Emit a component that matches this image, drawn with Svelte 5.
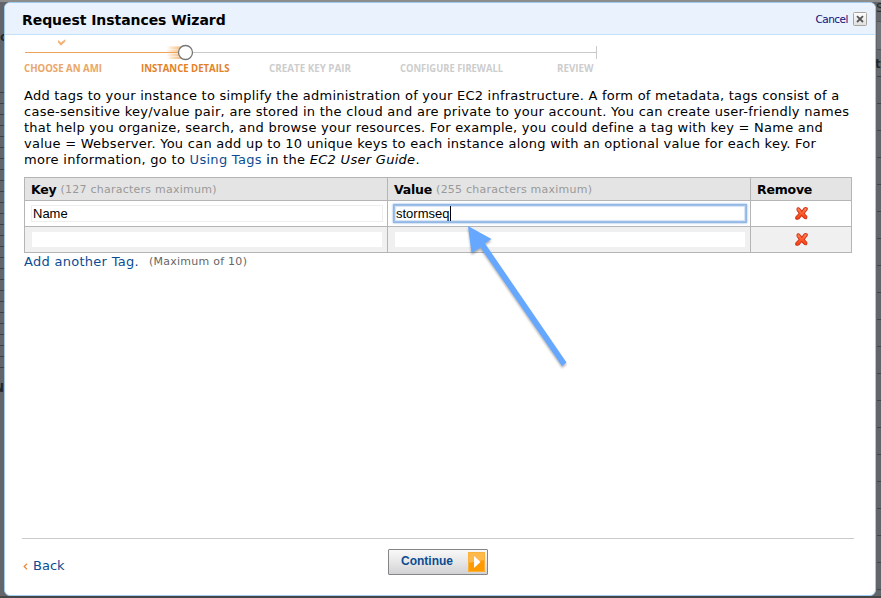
<script>
  const steps = [
    { label: 'CHOOSE AN AMI', x: 24, width: 78, state: 'done' },
    { label: 'INSTANCE DETAILS', x: 141, width: 88.5, state: 'current' },
    { label: 'CREATE KEY PAIR', x: 269, width: 82, state: '' },
    { label: 'CONFIGURE FIREWALL', x: 400, width: 103, state: '' },
    { label: 'REVIEW', x: 557, width: 36.5, state: '' }
  ];
  let rows = $state([
    { key: 'Name', value: 'stormseq', focused: true },
    { key: '', value: '', focused: false }
  ]);
</script>

<div class="page">
  <span class="behind left-top">lo</span>
  <span class="behind left-low">N</span>
  <span class="behind right-top">S</span>
  <span class="behind right-mid">to</span>
  <main class="dialog">
    <header>
      <h1>Request Instances Wizard</h1>
      <div class="cancel">
        <span>Cancel</span>
        <svg width="14" height="14" viewBox="0 0 14 14">
          <defs>
            <linearGradient id="close" x2="0" y2="1"><stop stop-color="#fff" /><stop offset="1" stop-color="#dedede" /></linearGradient>
          </defs>
          <rect x=".5" y=".5" width="13" height="13" rx="1" fill="url(#close)" stroke="#aaa69f" />
          <path d="M4 4.2 10 10M10 4.2 4 10" stroke="#555" stroke-width="1.8" />
        </svg>
      </div>
    </header>

    <svg class="steps" width="600" height="45" viewBox="6 35 600 45">
      <defs>
        <linearGradient id="trail"><stop stop-color="#f3a650" stop-opacity="0" /><stop offset="1" stop-color="#f3a650" stop-opacity=".5" /></linearGradient>
      </defs>
      <path d="M58 40v2.6l3 3.2 4.3-4.4v-2.2l-4.3 3.3z" fill="#f2b37a" />
      <path d="M185 52.5H596.5M596.5 46v13" fill="none" stroke="#cacaca" />
      <path d="M25 52.5H180" stroke="#eda35a" />
      <path d="M169 47h14v2h-14zM166 50h16v2h-16zM167 54h16v2h-16zM170 57h14v2h-14z" fill="url(#trail)" />
      <rect x="166" y="46" width="16" height="13" fill="url(#trail)" />
      <circle cx="185.5" cy="52.5" r="7" fill="#fff" stroke="#777" stroke-width="1.3" />
      {#each steps as step}
        <text class={step.state} x={step.x} y="72" textLength={step.width} lengthAdjust="spacingAndGlyphs">{step.label}</text>
      {/each}
    </svg>

    <section>
      <p class="intro">
        <span class="l1">Add tags to your instance to simplify the administration of your EC2 infrastructure. A form of metadata, tags consist of a</span>
        <span class="l2">case-sensitive key/value pair, are stored in the cloud and are private to your account. You can create user-friendly names</span>
        <span class="l3">that help you organize, search, and browse your resources. For example, you could define a tag with key = Name and</span>
        <span class="l4">value = Webserver. You can add up to 10 unique keys to each instance along with an optional value for each key. For</span>
        <span class="l5">more information, go to <a>Using Tags</a> in the <em>EC2 User Guide</em>.</span>
      </p>

      <div class="table">
        <div class="th"><b>Key</b> <small>(127 characters maximum)</small></div>
        <div class="th"><b>Value</b> <small>(255 characters maximum)</small></div>
        <div class="th"><b>Remove</b></div>
        {#each rows as row, i}
          <div class="td" class:alt={i % 2}><div class="field">{row.key}</div></div>
          <div class="td" class:alt={i % 2}>
            <div class="field" class:focused={row.focused}>{row.value}{#if row.focused}<i class="caret"></i>{/if}</div>
          </div>
          <div class="td remove" class:alt={i % 2}>
            <svg width="13" height="13" viewBox="0 0 14 14">
              <defs>
                <linearGradient id="red" x2="0" y2="1"><stop stop-color="#ff8a60" /><stop offset=".5" stop-color="#ff5a2b" /><stop offset="1" stop-color="#f34112" /></linearGradient>
              </defs>
              <path d="M2.6 1.1Q3.9.2 5.3 1.9L7.4 4.6 9.8 1.2Q11.2.1 13.2 1.2 13.6 2.6 12.2 4L9.9 7l2.7 2.9Q13.2 11.2 12.2 12.6 10.8 13 9.6 11.8L7.1 9.2 4.5 12.4Q2.8 13.8 .8 12.6.4 11 1.7 9.9L4.5 7 2.7 4.4Q1.6 2.6 2.6 1.1Z" fill="url(#red)" stroke="#d23218" stroke-width="1.1" />
            </svg>
          </div>
        {/each}
      </div>
      <div class="add"><a>Add another Tag.</a> <span>(Maximum of 10)</span></div>
    </section>

    <footer>
      <a class="back"><svg width="5" height="7" viewBox="0 0 5 7"><path d="M4 .7 1.2 3.5 4 6.3" fill="none" stroke="#ef8b3a" stroke-width="1.3" /></svg>Back</a>
      <button>
        <span>Continue</span>
        <svg width="17" height="20" viewBox="0 0 17 20">
          <path d="M0 0h17v20H0z" fill="#ff9a00" />
          <path d="M0 0h17v8L0 11z" fill="#ffb84b" />
          <path d="M.5 .5h16v19H.5z" fill="none" stroke="#f9b23c" />
          <path d="M6 4v12l6.5-6z" fill="#fff" />
        </svg>
      </button>
    </footer>
  </main>

  <svg class="arrow" width="130" height="160" viewBox="455 220 130 160">
    <path d="M468 226 491.5 239 485 243.5 566.5 362.5 562 366 480.5 247.5 471.5 253Z" fill="#66a8ff" />
  </svg>
</div>

<style>
  :global(body) { margin: 0; }
  .page {
    position: relative;
    box-sizing: border-box;
    width: 881px;
    height: 598px;
    padding: 2px 4px;
    overflow: hidden;
    font: 13px/16px 'DejaVu Sans', sans-serif;
    color: #000;
    background:
      linear-gradient(#8d8d8d, #8d8d8d) 0 0 / 100% 2px no-repeat,
      linear-gradient(#444648, #444648) 0 100% / 100% 2px no-repeat,
      linear-gradient(#62666a 0 21px, #51565a 21px 22px, #707478 22px 49px, #51565a 49px 50px, #666a6e 50px 76px, #3f4448 76px 77px, #62666a 77px) 877px 0 / 4px 77px no-repeat,
      repeating-linear-gradient(#62666a 0 26px, #42474b 26px 27px) 877px 77px / 4px 100% no-repeat,
      repeating-linear-gradient(#62666a 0 10px, #3e4245 10px 11px) 0 82px / 5px 294px no-repeat,
      #62666a;
  }
  .behind { position: absolute; font-size: 12px; font-weight: bold; color: #24282b; }
  .left-top { left: -4px; top: 29px; }
  .left-low { left: -6px; top: 380px; }
  .right-top { left: 876px; top: 0; font-weight: normal; }
  .right-mid { left: 875px; top: 56px; }
  .dialog {
    position: relative;
    box-sizing: border-box;
    display: flex;
    flex-direction: column;
    width: 872px;
    height: 594px;
    border: 1px solid #9fcbef;
    border-radius: 6px;
    overflow: hidden;
    background: #fff;
  }
  header {
    box-sizing: border-box;
    display: flex;
    align-items: center;
    justify-content: space-between;
    flex: none;
    height: 32px;
    padding: 1px 8px 0 17px;
    background: #eaf2fe;
    border-bottom: 1px solid #c3e1f7;
  }
  h1 { margin: 2px 0 0; font-size: 14px; line-height: 18px; letter-spacing: -.06px; }
  .cancel { display: flex; align-items: center; gap: 5px; font-size: 10.5px; letter-spacing: -.5px; color: #10107c; }
  .cancel span { margin-top: 0; }
  .steps { display: block; flex: none; margin-left: 1px; }
  .steps text { font: bold 10.5px 'Open Sans', sans-serif; fill: #cdcdcd; }
  .steps text.done { fill: #eaa667; }
  .steps text.current { fill: #e4811f; }
  section { padding: 8px 22px 0 19px; }
  .intro { margin: 0; }
  .intro span { display: block; white-space: nowrap; letter-spacing: .26px; }
  .intro .l1 { letter-spacing: .242px; }
  .intro .l2 { letter-spacing: .28px; }
  .intro .l5 { letter-spacing: .29px; }
  a { color: #0c4c92; }
  em { font-style: italic; }
  .table {
    display: grid;
    grid-template-columns: 362px 362px 100px;
    grid-template-rows: 22px 25px 25px;
    gap: 1px;
    box-sizing: border-box;
    width: 828px;
    margin-top: 9px;
    padding: 1px;
    background: #b5b5b5;
  }
  .th { display: flex; align-items: center; gap: 4px; padding: 2px 6px 0; background: #e4e4e4; }
  .th b { font-size: 12.5px; letter-spacing: -.2px; }
  .th small { font-size: 11px; letter-spacing: .24px; color: #999; }
  .td { display: flex; padding: 4px; background: #fff; }
  .alt { background: #f0f0f0; }
  .field {
    box-sizing: border-box;
    flex: 1;
    margin: 0 0 0 2px;
    padding-left: 1px;
    border: 1px solid #eee;
    background: #fff;
    font: 13px/15px 'Liberation Sans', sans-serif;
  }
  .alt .field { border-color: #f0f0f0; }
  .focused { border-color: #9dbfe8; box-shadow: 0 0 0 1px #94b8e4, 0 0 2px 1px #82afe5, inset 0 0 1px 1px #d6e4f6; }
  .caret { display: inline-block; width: 1px; height: 15px; margin-left: 1px; background: #000; vertical-align: top; }
  .remove { align-items: center; justify-content: center; padding-left: 5px; }
  .add { display: flex; gap: 10px; margin-top: 1px; white-space: nowrap; letter-spacing: .28px; }
  .add span { font-size: 11px; letter-spacing: .26px; color: #666; }
  footer {
    display: grid;
    grid-template-columns: 366px 100px 1fr;
    align-items: start;
    margin: auto 21px 0 17px;
    height: 56px;
    border-top: 1px solid #cbcbcb;
  }
  .back { display: flex; align-items: center; gap: 5px; margin-top: 19px; padding-left: 1px; }
  button {
    box-sizing: border-box;
    display: flex;
    align-items: center;
    justify-content: space-between;
    width: 100px;
    height: 26px;
    margin-top: 10px;
    padding: 0 2px 0 12px;
    border: 1px solid #858585;
    border-radius: 1px;
    background: linear-gradient(#f8f8f8, #e7e7e8 50%, #d2d2d4);
    font: bold 12px/14px 'Liberation Sans', sans-serif;
    color: #0c4c92;
  }
  button span { margin-bottom: 2px; }
  .arrow { position: absolute; left: 455px; top: 220px; filter: drop-shadow(0 2px 1px rgb(0 0 0 / .3)); }
</style>
